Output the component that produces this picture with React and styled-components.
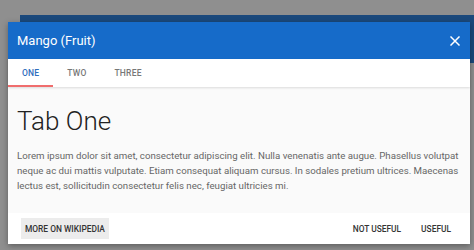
import React from "react";
import styled, { createGlobalStyle } from "styled-components";

const Global = createGlobalStyle`
  html, body { margin: 0; padding: 0; }
  body {
    width: 474px;
    height: 250px;
    overflow: hidden;
    background: #8f8f8f;
    font-family: Roboto, "Noto Sans", Arial, sans-serif;
  }
`;

const Page = styled.div`
  position: relative;
  width: 474px;
  height: 250px;
  padding: 15px 0 0 20px;
  box-sizing: border-box;
`;

const AppBar = styled.div`
  height: 48px;
  background: #1b497c;
`;

const Overlay = styled.div`
  position: absolute;
  inset: 0;
  padding: 22px 0 0 8px;
  box-sizing: border-box;
`;

const Dialog = styled.div`
  width: 462px;
  background: #fff;
  display: flex;
  flex-direction: column;
  box-shadow: 0 2px 6px rgba(0, 0, 0, 0.35);
`;

const Header = styled.div`
  height: 37px;
  background: #166bc9;
  display: flex;
  align-items: center;
  justify-content: space-between;
  padding: 0 8px 0 9px;
`;

const Title = styled.div`
  color: #fff;
  font-size: 13px;
  font-weight: 400;
  margin-top: -1px;
`;

const Close = styled.button`
  background: none;
  border: 0;
  padding: 0;
  width: 14px;
  height: 14px;
  display: flex;
  align-items: center;
  justify-content: center;
  cursor: pointer;
`;

const TabBar = styled.div`
  height: 28px;
  display: flex;
  background: #fff;
  position: relative;
  z-index: 1;
  box-shadow: 0 1px 2px rgba(0, 0, 0, 0.12);
`;

const Tab = styled.div`
  padding: 0 14px;
  display: flex;
  align-items: center;
  font-size: 8.5px;
  font-weight: 500;
  letter-spacing: 0.2px;
  color: ${(p) => (p.$active ? "#2f6dbd" : "#777")};
  border-bottom: 2px solid ${(p) => (p.$active ? "#f06d6d" : "transparent")};
  box-sizing: border-box;
  padding-top: 2px;
`;

const Body = styled.div`
  background: #fafafa;
  height: 126px;
  padding: 17px 9px 0 9px;
  box-sizing: border-box;
`;

const Heading = styled.h1`
  margin: 0;
  font-size: 26px;
  font-weight: 300;
  color: #222;
  line-height: 34px;
`;

const Text = styled.p`
  margin: 10px 0 0;
  font-size: 9.7px;
  line-height: 15px;
  color: #666;
`;

const Footer = styled.div`
  height: 31px;
  display: flex;
  align-items: center;
  padding: 0 13px;
  background: #fff;
`;

const Button = styled.button`
  border: 0;
  background: ${(p) => (p.$filled ? "#ececec" : "transparent")};
  height: 21px;
  padding: 0 ${(p) => (p.$filled ? "4px" : "6px")};
  font-family: inherit;
  font-size: 8.4px;
  font-weight: 500;
  color: #333;
  cursor: pointer;
  margin-left: ${(p) => p.$ml || 0};
`;

const Spacer = styled.div`
  flex: 1;
`;

export default function App() {
  return (
    <>
      <Global />
      <Page>
        <AppBar />
        <Overlay>
          <Dialog>
            <Header>
              <Title>Mango (Fruit)</Title>
              <Close aria-label="close">
                <svg width="10" height="10" viewBox="0 0 10 10">
                  <path d="M1 1 L9 9 M9 1 L1 9" stroke="#fff" strokeWidth="1.5" strokeLinecap="square" />
                </svg>
              </Close>
            </Header>
            <TabBar>
              <Tab $active>ONE</Tab>
              <Tab>TWO</Tab>
              <Tab>THREE</Tab>
            </TabBar>
            <Body>
              <Heading>Tab One</Heading>
              <Text>
                Lorem ipsum dolor sit amet, consectetur adipiscing elit. Nulla venenatis ante augue. Phasellus volutpat
                neque ac dui mattis vulputate. Etiam consequat aliquam cursus. In sodales pretium ultrices. Maecenas
                lectus est, sollicitudin consectetur felis nec, feugiat ultricies mi.
              </Text>
            </Body>
            <Footer>
              <Button $filled>MORE ON WIKIPEDIA</Button>
              <Spacer />
              <Button>NOT USEFUL</Button>
              <Button $ml="8px">USEFUL</Button>
            </Footer>
          </Dialog>
        </Overlay>
      </Page>
    </>
  );
}
